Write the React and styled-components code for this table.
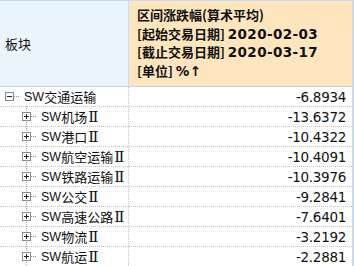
import React from "react";
import styled, { createGlobalStyle } from "styled-components";

const rows = [
  { name: "交通运输", value: "-6.8934", level: 0, open: true },
  { name: "机场", value: "-13.6372", level: 1 },
  { name: "港口", value: "-10.4322", level: 1 },
  { name: "航空运输", value: "-10.4091", level: 1 },
  { name: "铁路运输", value: "-10.3976", level: 1 },
  { name: "公交", value: "-9.2841", level: 1 },
  { name: "高速公路", value: "-7.6401", level: 1 },
  { name: "物流", value: "-3.2192", level: 1 },
  { name: "航运", value: "-2.2881", level: 1 },
];

const Global = createGlobalStyle`
  html, body { margin: 0; padding: 0; background: #fff; }
  body {
    font-family: "Liberation Sans", "Noto Sans CJK SC", sans-serif;
    font-size: 13px;
    color: #111;
  }
`;

const Sheet = styled.div`
  width: 354px;
  height: 266px;
  overflow: hidden;
  box-sizing: border-box;
  border-top: 1px solid #c8dcee;
  border-right: 2px solid #c8dcee;
`;

const Head = styled.div`
  display: grid;
  grid-template-columns: 129px 1fr;
  height: 86px;
  box-sizing: border-box;
  border-bottom: 1px solid #c7d3de;
`;

const HeadLeft = styled.div`
  display: flex;
  align-items: center;
  padding-left: 5px;
  background: #eaf4fd;
  border-right: 1px solid #c8dcee;
  font-size: 13px;
`;

const HeadRight = styled.div`
  background: #fde5bd;
  padding: 5px 0 0 8px;
  font-family: "Noto Sans CJK SC", sans-serif;
  font-weight: bold;
  font-size: 13px;
  line-height: 18.5px;
  white-space: nowrap;
`;

const Stamp = styled.span`
  font-family: "DejaVu Sans", sans-serif;
  font-weight: bold;
  font-size: 13.5px;
  letter-spacing: 0.4px;
`;

const Row = styled.div`
  display: grid;
  grid-template-columns: 129px 1fr;
  height: 20px;
  box-sizing: border-box;
  border-bottom: 1px dotted #c4c4c4;
`;

const NameCell = styled.div`
  position: relative;
  display: flex;
  align-items: center;
  padding-left: ${(p) => (p.$level ? 22 : 5)}px;
  border-right: 1px dotted #c4c4c4;
  white-space: nowrap;
  font-size: 13px;
  &::before {
    content: "";
    display: ${(p) => (p.$level ? "block" : "none")};
    position: absolute;
    left: 26px;
    top: -1px;
    bottom: -1px;
    border-left: 1px dotted #a0a0a0;
  }
`;

const Toggle = styled.span`
  position: relative;
  z-index: 1;
  display: inline-block;
  width: 9px;
  height: 9px;
  box-sizing: border-box;
  border: 1px solid #8a8a8a;
  background: #fff;
  margin-right: 10px;
  flex: none;
  &::before {
    content: "";
    position: absolute;
    left: 1px;
    top: 3px;
    width: 5px;
    height: 1px;
    background: #222;
  }
  &::after {
    content: "";
    position: absolute;
    left: 3px;
    top: 1px;
    width: 1px;
    height: 5px;
    background: #222;
    display: ${(p) => (p.$open ? "none" : "block")};
  }
`;

const Stub = styled.span`
  position: absolute;
  left: 8px;
  top: 3px;
  width: 5px;
  border-top: 1px dotted #999;
`;

const Latin = styled.span`
  font-family: "Liberation Sans", sans-serif;
  font-size: 12.5px;
`;

const Roman = styled.span`
  font-family: "DejaVu Serif", serif;
  font-size: 15px;
  margin-left: 1px;
`;

const ValueCell = styled.div`
  display: flex;
  align-items: center;
  justify-content: flex-end;
  padding-right: 6px;
  font-family: "DejaVu Sans", sans-serif;
  font-size: 13.5px;
  letter-spacing: -0.3px;
`;

export default function App() {
  return (
    <>
      <Global />
      <Sheet>
        <Head>
          <HeadLeft>板块</HeadLeft>
          <HeadRight>
            <div>区间涨跌幅(算术平均)</div>
            <div>[起始交易日期] <Stamp>2020-02-03</Stamp></div>
            <div>[截止交易日期] <Stamp>2020-03-17</Stamp></div>
            <div>[单位] <Stamp>%↑</Stamp></div>
          </HeadRight>
        </Head>
        {rows.map((r) => (
          <Row key={r.name}>
            <NameCell $level={r.level}>
              <Toggle $open={r.open}>
                <Stub />
              </Toggle>
              <Latin>SW</Latin>
              {r.name}
              {r.level > 0 && <Roman>Ⅱ</Roman>}
            </NameCell>
            <ValueCell>{r.value}</ValueCell>
          </Row>
        ))}
      </Sheet>
    </>
  );
}
